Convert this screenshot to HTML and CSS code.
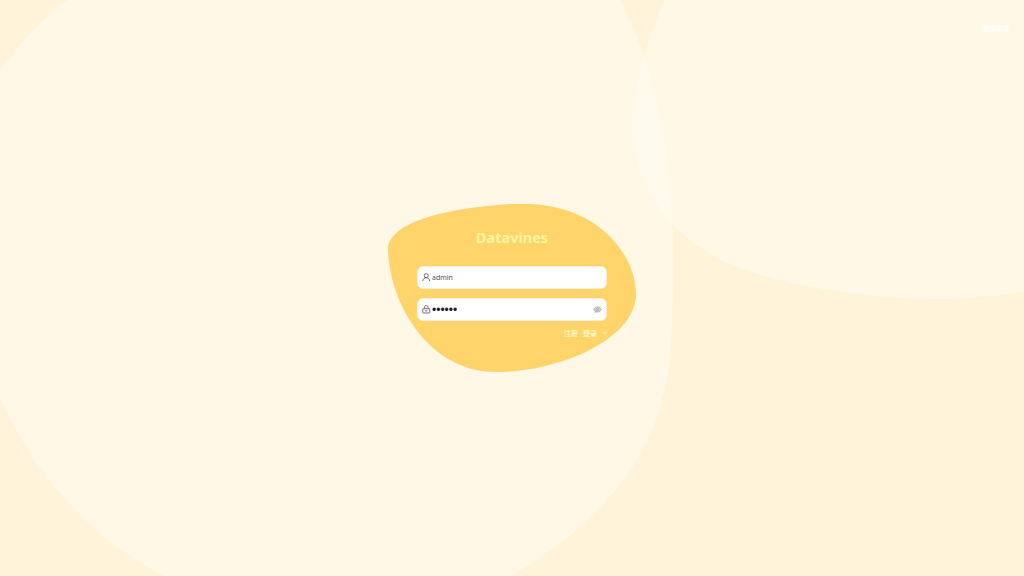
FILE: index.html
```html
<!DOCTYPE html>
<html lang="zh-CN">
<head>
<meta charset="utf-8">
<title>Datavines</title>
<link rel="stylesheet" href="styles.css">
</head>
<body>
<svg class="backdrop" viewBox="0 0 1024 576" aria-hidden="true">
  <path class="wash" d="M68 0 C42 17 18 46 -2 74 L-2 392 C30 470 90 540 168 578 L508 578 C590 530 650 470 667 380 C677 300 676 200 660 115 C655 90 640 35 620 0 Z"/>
  <path class="wash" d="M664 0 C650 36 633 80 632 130 C636 190 670 232 720 260 C790 290 880 300 950 299 C980 298 1005 295 1026 291 L1026 0 Z"/>
</svg>
<span class="lang">简体中文</span>
<main class="card">
  <svg class="blob" viewBox="0 0 248 168" aria-hidden="true">
    <path d="M0 46 C0 20 50 6 110 1 C128 -1 150 -1 170 4 C218 15 248 55 248 90 C248 135 172 168 108 168 C42 168 2 102 0 46 Z"/>
  </svg>
  <form class="form">
    <h1 class="title">Datavines</h1>
    <div class="field">
      <svg class="icon" viewBox="0 0 16 16"><circle cx="8" cy="5" r="3.8"/><path d="M1.4 15.4 C1.8 11.2 4.8 8.8 8 8.8 C11.2 8.8 14.2 11.2 14.6 15.4"/></svg>
      <span class="value">admin</span>
    </div>
    <div class="field">
      <svg class="icon" viewBox="0 0 16 16"><rect x="1.4" y="7" width="13.2" height="8" rx="1.2"/><path d="M4.6 7 V4.4 C4.6 2.4 6.2 1 8 1 C9.8 1 11.4 2.4 11.4 4.4 V7"/><path d="M5.6 11 H10.4"/></svg>
      <span class="dots">••••••</span>
      <svg class="eye" viewBox="0 0 16 16"><path class="eye-shape" d="M1 8 C3 4.8 5.4 3.4 8 3.4 C10.6 3.4 13 4.8 15 8 C13 11.2 10.6 12.6 8 12.6 C5.4 12.6 3 11.2 1 8 Z"/><circle cx="8" cy="8" r="2.4"/><path d="M3 14 L13.5 2"/></svg>
    </div>
    <div class="actions">
      <span>注册</span>
      <span class="login">登录
        <svg class="arrow" viewBox="0 0 10 10"><path d="M1 5 H9 M5.8 1.8 L9 5 L5.8 8.2"/></svg>
      </span>
    </div>
  </form>
</main>
</body>
</html>
```
FILE: styles.css
```css
* { box-sizing: border-box; }
html, body { height: 100%; margin: 0; }
body {
  position: relative;
  overflow: hidden;
  display: flex;
  align-items: center;
  justify-content: center;
  background: #fff3d9;
  font-family: "Noto Sans", "Noto Sans CJK SC", sans-serif;
}
.backdrop { position: absolute; inset: 0; width: 100%; height: 100%; }
.wash { fill: #fffbee; fill-opacity: .6; }
.lang {
  position: absolute;
  top: 22px;
  right: 14px;
  font-size: 7px;
  line-height: 12px;
  font-weight: 700;
  color: #fff;
  font-family: "Noto Sans CJK SC", sans-serif;
}
.card {
  position: relative;
  width: 248px;
  height: 168px;
  display: flex;
  justify-content: center;
}
.blob { position: absolute; inset: 0; width: 100%; height: 100%; }
.blob path { fill: #ffd46b; }
.form { position: relative; width: 190px; padding-top: 23px; }
.title {
  margin: 0 0 19px;
  text-align: center;
  font-size: 14.5px;
  line-height: 20px;
  font-weight: 700;
  color: #fff6a0;
}
.field {
  display: flex;
  align-items: center;
  gap: 1.5px;
  height: 23px;
  margin-bottom: 9px;
  padding: 0 4px;
  background: #fff;
  border: 1px solid #fbeed3;
  border-radius: 6px;
}
.field + .field { margin-bottom: 7px; }
.icon { width: 8.5px; height: 8.5px; flex: none; fill: none; stroke: #444; stroke-width: 1.4; }
.value { font-size: 7px; line-height: 10px; color: #555; }
.dots { flex: 1; font-size: 12px; line-height: 1; color: #222; font-family: "Liberation Sans", sans-serif; }
.eye { width: 9px; height: 9px; flex: none; fill: none; stroke: #b0b0b0; stroke-width: 1.6; margin-top: -1px; }
.eye-shape { fill: #d4d4d4; }
.actions {
  display: flex;
  justify-content: flex-end;
  align-items: center;
  gap: 5px;
  font-size: 7px;
  line-height: 10px;
  font-weight: 700;
  color: #fff5c2;
  font-family: "Noto Sans CJK SC", sans-serif;
}
.login { display: flex; align-items: center; gap: 4px; }
.arrow { width: 6px; height: 6px; fill: none; stroke: #fff5c2; stroke-width: 1.2; }
```
